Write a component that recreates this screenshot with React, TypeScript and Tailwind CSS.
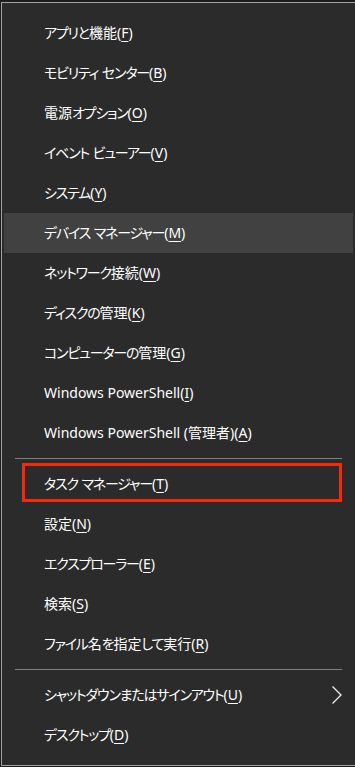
import { Fragment } from "react";

type Item = { label: string; key: string; active?: boolean; marked?: boolean; sub?: boolean };

const groups: Item[][] = [
  [
    { label: "アプリと機能", key: "F" },
    { label: "モビリティ センター", key: "B" },
    { label: "電源オプション", key: "O" },
    { label: "イベント ビューアー", key: "V" },
    { label: "システム", key: "Y" },
    { label: "デバイス マネージャー", key: "M", active: true },
    { label: "ネットワーク接続", key: "W" },
    { label: "ディスクの管理", key: "K" },
    { label: "コンピューターの管理", key: "G" },
    { label: "Windows PowerShell", key: "I" },
    { label: "Windows PowerShell (管理者)", key: "A" },
  ],
  [
    { label: "タスク マネージャー", key: "T", marked: true },
    { label: "設定", key: "N" },
    { label: "エクスプローラー", key: "E" },
    { label: "検索", key: "S" },
    { label: "ファイル名を指定して実行", key: "R" },
  ],
  [
    { label: "シャットダウンまたはサインアウト", key: "U", sub: true },
    { label: "デスクトップ", key: "D" },
  ],
];

// kana in the Windows UI font is narrower than Noto's, so tighten those runs
const Label = ({ text }: { text: string }) => (
  <>
    {text.split(/([\u3040-\u30ff]+)/).map((part, i) =>
      /[\u3040-\u30ff]/.test(part) ? (
        <span key={i} className="tracking-[-1.2px]">
          {part}
        </span>
      ) : (
        part
      )
    )}
  </>
);

const MenuRow = ({ item }: { item: Item }) => (
  <div
    className={`relative mx-[2px] flex h-[40px] items-center pl-[40px] pr-[10px] ${
      item.active ? "bg-[#414141]" : ""
    }`}
  >
    <span className="text-[14px] leading-none text-white [font-feature-settings:'palt']">
      <Label text={item.label} />(<span className="underline underline-offset-[3px]">{item.key}</span>)
    </span>
    {item.sub && (
      <svg className="absolute right-[10px] top-[10px]" width="12" height="20" viewBox="0 0 12 20">
        <path d="M1.5 1.5 L10 10 L1.5 18.5" fill="none" stroke="#f0f0f0" strokeWidth="1.3" />
      </svg>
    )}
    {item.marked && (
      <div className="pointer-events-none absolute left-[18px] right-[11px] top-[-1px] h-[39px] border-[3px] border-[#f52a0c]" />
    )}
  </div>
);

export default function App() {
  return (
    <div
      className="h-[767px] w-[355px] overflow-hidden bg-[#1c1c1c] pl-[1px] pt-[2px]"
      style={{ fontFamily: '"Noto Sans", "Noto Sans CJK JP", sans-serif' }}
    >
      <div className="border-b border-l border-t border-[#a3a3a3] bg-[#2b2b2b] py-[10px]">
        {groups.map((group, gi) => (
          <Fragment key={gi}>
            {gi > 0 && (
              <div className="flex h-[11px] items-center px-[13px]">
                <div className="h-px w-[330px] bg-[#808080]" />
              </div>
            )}
            {group.map((item) => (
              <MenuRow key={item.key} item={item} />
            ))}
          </Fragment>
        ))}
      </div>
    </div>
  );
}
